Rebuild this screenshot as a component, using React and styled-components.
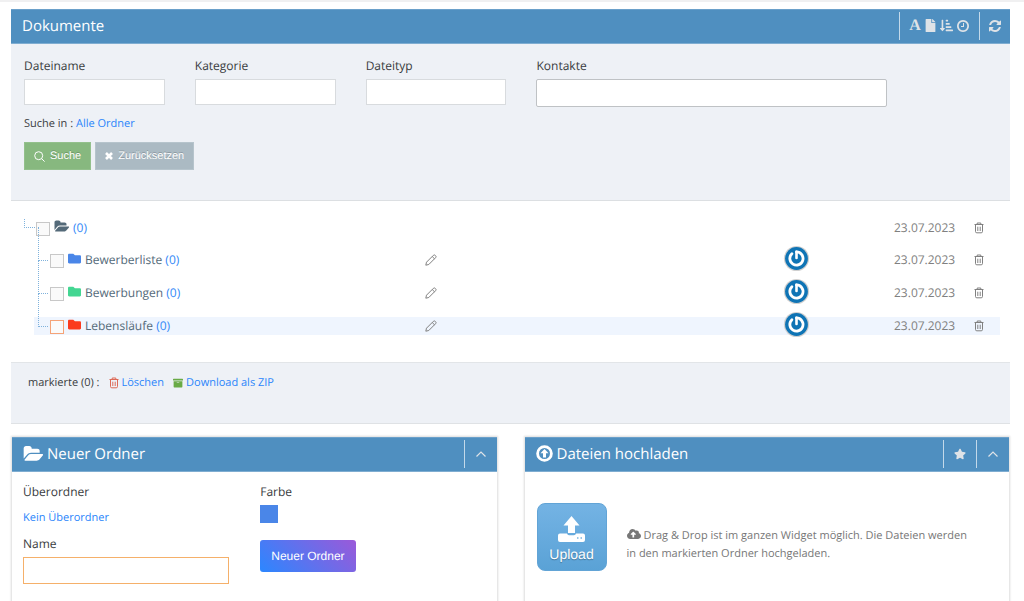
import { useState } from "react"
import styled, { createGlobalStyle } from "styled-components"
import { FaArchive, FaCloudUploadAlt, FaFile, FaFolder, FaSortAmountDownAlt, FaStar } from "react-icons/fa"

const GlobalStyle = createGlobalStyle`
  * {
    box-sizing: border-box;
  }
  body {
    margin: 0;
    background: white;
    color: #393c40;
    font-family: "Open Sans", "Noto Sans", sans-serif;
    font-size: 11px;
    line-height: 18px;
    text-rendering: geometricPrecision;
  }
  button, input {
    font-family: inherit;
    text-rendering: inherit;
  }
  svg {
    display: block;
    flex: none;
  }
`

const Page = styled.div`
  min-height: 100vh;
  display: flex;
  flex-direction: column;
  padding: 7px 14px 0 11px;
  border-top: 2px solid #f0f0f1;
`

const Bar = styled.header`
  height: 35px;
  flex: none;
  display: flex;
  align-items: center;
  padding: 0 0 2px 11px;
  background: #4f8fc0;
  border-top: 1px solid #6ba0ca;
  border-bottom: 1px solid #7fadd1;
  color: white;
`
const BarTitle = styled.h2`
  flex: 1;
  display: flex;
  align-items: center;
  gap: 4px;
  margin: 0;
  font-size: 15px;
  font-weight: 400;
`
const Tools = styled.div`
  height: 28px;
  display: flex;
  align-items: center;
  gap: 3px;
  padding: 0 ${props => props.$pad || 10}px;
  border-left: 1px solid #c3d9ea;
`
const IconButton = styled.button`
  display: flex;
  padding: 0;
  border: none;
  background: none;
  color: ${props => props.color || "#dfe3e7"};
  cursor: pointer;
`
const Letter = styled.span`
  width: 12px;
  font-family: "Liberation Serif", "Times New Roman", serif;
  font-size: 16px;
  font-weight: 700;
`

const Filter = styled.form`
  padding: 13px 123px 30px 13px;
  background: #eef1f6;
  border-bottom: 1px solid #dcdfe2;
`
const FilterFields = styled.div`
  display: grid;
  grid-template-columns: 141fr 141fr 141fr 351fr;
  gap: 30px;
  align-items: start;
`
const Field = styled.div`
  width: 100%;
  display: flex;
  flex-direction: column;
  gap: 4px;
`
const Label = styled.label`
  font-size: 12px;
`
const Input = styled.input`
  width: 100%;
  height: ${props => props.$height || 26}px;
  padding: 2px 6px;
  background: white;
  border: 1px solid ${props => props.$border || "#d8dbde"};
  border-radius: ${props => props.$radius || 0}px;
`
const SearchIn = styled.p`
  margin: 8px 0 9px;
`
const Link = styled.a`
  color: #2a85fb;
  text-decoration: none;
`
const Buttons = styled.div`
  display: flex;
  gap: 4px;
`
const Button = styled.button`
  height: 28px;
  display: flex;
  align-items: center;
  gap: 5px;
  padding: 0 9px;
  border: 1px solid ${props => props.$edge};
  background: ${props => props.$fill};
  color: white;
  font-family: "Liberation Sans", Arial, sans-serif;
  font-size: 11px;
  text-shadow: 0 -1px 0 rgba(0, 0, 0, 0.2);
  cursor: pointer;
`

const Tree = styled.ul`
  list-style: none;
  margin: 0;
  padding: 18px 10px 27px 23px;
`
const Branch = styled.ul`
  list-style: none;
  margin: 14px 0 0;
  padding: 0;
  display: flex;
  flex-direction: column;
  gap: 15px;
`
const Node = styled.li`
  position: relative;
  &::before {
    content: "";
    position: absolute;
    left: ${props => (props.$root ? "-10px" : "4px")};
    top: ${props => (props.$root ? "0" : "-24px")};
    width: ${props => (props.$root ? "10px" : "9px")};
    height: ${props => (props.$root ? "8px" : "33px")};
    border-left: 1px dotted #7fb2dc;
    border-bottom: 1px dotted #7fb2dc;
  }
`
const Row = styled.div`
  height: 18px;
  display: grid;
  grid-template-columns: 391fr 358fr 111fr 80fr 26px;
  grid-template-rows: 18px;
  align-items: center;
  background: ${props => (props.$active ? "#eff5fe" : "transparent")};
`
const Name = styled.label`
  display: flex;
  align-items: center;
  gap: 4px;
  padding-left: ${props => (props.$root ? 2 : 16)}px;
  color: #546a79;
  font-size: 12px;
  svg {
    margin-bottom: 3px;
  }
`
const Check = styled.input`
  appearance: none;
  width: 14px;
  height: 14px;
  flex: none;
  margin: 1px 0 0;
  background: #fafafa;
  border: 1px solid ${props => (props.$active ? "#f5a377" : "#c8c8c8")};
  &:checked {
    background: #8fb4d4;
  }
`
const Count = styled.span`
  color: #3388f7;
`
const DateText = styled.time`
  grid-column: 4;
  color: #808080;
  font-size: 12px;
`
const Owner = styled.span`
  display: flex;
  margin-bottom: 3px;
`

const Marked = styled.footer`
  display: flex;
  padding: 11px 17px 31px;
  background: #eef1f6;
  border-top: 1px solid #e2e5e8;
  border-bottom: 1px solid #dfe2e5;
`
const MarkedLink = styled(Link)`
  display: flex;
  align-items: center;
  gap: 3px;
  margin-left: 9px;
`

const Cards = styled.div`
  flex: 1;
  display: grid;
  grid-template-columns: 1fr 1fr;
  gap: 28px;
  margin: 13px 1px 0;
`
const Card = styled.section`
  display: flex;
  flex-direction: column;
  box-shadow: 0 0 2px 1px rgba(0, 0, 0, 0.14);
`
const FolderForm = styled.form`
  display: grid;
  grid-template-columns: 206fr 205fr;
  gap: 31px;
  padding: 11px 31px 18px 11px;
`
const FormColumn = styled.div`
  display: flex;
  flex-direction: column;
  align-items: flex-start;
  gap: ${props => props.$gap}px;
`
const Caption = styled.span`
  font-size: 12px;
`
const Swatch = styled.input`
  appearance: none;
  width: 18px;
  height: 18px;
  padding: 0;
  border: none;
  background: none;
  &::-webkit-color-swatch-wrapper {
    padding: 0;
  }
  &::-webkit-color-swatch {
    border: none;
  }
`
const CreateButton = styled.button`
  height: 32px;
  margin-top: 13px;
  padding: 0 11px;
  border: none;
  border-radius: 3px;
  background: linear-gradient(45deg, #2b87ff, #9b59d9);
  color: white;
  font-size: 12px;
  font-family: "Liberation Sans", Arial, sans-serif;
  cursor: pointer;
`
const UploadBody = styled.div`
  display: flex;
  align-items: center;
  gap: 20px;
  padding: 31px 40px 30px 12px;
`
const UploadButton = styled.button`
  width: 70px;
  height: 68px;
  flex: none;
  display: flex;
  flex-direction: column;
  align-items: center;
  justify-content: center;
  gap: 3px;
  padding: 4px 0 0;
  border: 1px solid #62a4d6;
  border-radius: 8px;
  background: linear-gradient(#74b3e4, #5aa2d6);
  color: white;
  font-family: "Liberation Sans", Arial, sans-serif;
  font-size: 14px;
  text-shadow: 0 1px 1px rgba(0, 0, 0, 0.3);
  cursor: pointer;
`
const Hint = styled.p`
  margin: 0;
  padding-top: 15px;
  color: #777;
  svg {
    display: inline-block;
    vertical-align: -2px;
    margin-right: 3px;
  }
`

const FolderOpen = ({ size }) => (
  <svg width={size} height={size} viewBox="0 0 1920 1792" fill="currentColor">
    <path d="M1943 952q0 31-31 66l-336 396q-43 51-120.5 86.500t-143.500 35.500h-1088q-34 0-60.500-13t-26.500-43q0-31 31-66l336-396q43-51 120.500-86.500t143.500-35.500h1088q34 0 60.500 13t26.500 43zm-343-344v160h-832q-94 0-197 47.500t-164 119.500l-337 396-5 6q0-4-.5-12.500t-.5-12.500v-960q0-92 66-158t158-66h320q92 0 158 66t66 158v32h544q92 0 158 66t66 158z" />
  </svg>
)
const Clock = () => (
  <svg width="14" height="14" viewBox="0 0 1792 1792" fill="currentColor">
    <path d="M1024 544v448q0 14-9 23t-23 9h-320q-14 0-23-9t-9-23v-64q0-14 9-23t23-9h224v-352q0-14 9-23t23-9h64q14 0 23 9t9 23zm416 352q0-148-73-273t-198-198-273-73-273 73-198 198-73 273 73 273 198 198 273 73 273-73 198-198 73-273zm224 0q0 209-103 385.500t-279.500 279.500-385.500 103-385.500-103-279.500-279.500-103-385.500 103-385.500 279.500-279.500 385.500-103 385.500 103 279.500 279.500 103 385.500z" />
  </svg>
)
const Refresh = () => (
  <svg width="12" height="14" viewBox="0 0 1536 1792" fill="currentColor">
    <path d="M1511 1056q0 5-1 7-64 268-268 434.500t-478 166.500q-146 0-282.500-55t-243.500-157l-129 129q-19 19-45 19t-45-19-19-45v-448q0-26 19-45t45-19h448q26 0 45 19t19 45-19 45l-137 137q71 66 161 102t187 36q134 0 250-65t186-179q11-17 53-117 8-23 30-23h192q13 0 22.500 9.500t9.500 22.500zm25-800v448q0 26-19 45t-45 19h-448q-26 0-45-19t-19-45 19-45l138-138q-148-137-349-137-134 0-250 65t-186 179q-11 17-53 117-8 23-30 23h-199q-13 0-22.500-9.500t-9.500-22.500v-7q65-268 270-434.500t480-166.500q146 0 284 55.500t245 156.500l130-129q19-19 45-19t45 19 19 45z" />
  </svg>
)
const Chevron = () => (
  <svg width="12" height="12" viewBox="0 0 12 12" fill="none" stroke="currentColor" strokeWidth="1.2">
    <path d="M1.500 8.500L6 4l4.500 4.500" />
  </svg>
)
const ArrowCircle = () => (
  <svg width="17" height="17" viewBox="0 0 17 17" fill="none" stroke="currentColor">
    <circle cx="8.5" cy="8.5" r="6.900" strokeWidth="2.800" />
    <path d="M8.500 4l4 4.200H10V12.500H7V8.200H4.500z" fill="currentColor" stroke="none" />
  </svg>
)
const Magnifier = () => (
  <svg width="11" height="11" viewBox="0 0 11 11" fill="none" stroke="currentColor">
    <circle cx="4.700" cy="4.700" r="4" />
    <path d="M7.600 7.600l3 3" />
  </svg>
)
const Cross = () => (
  <svg width="8" height="8" viewBox="0 0 8 8" fill="none" stroke="currentColor" strokeWidth="2.600">
    <path d="M1 1l6 6M7 1L1 7" />
  </svg>
)
const Pencil = () => (
  <svg width="12" height="12" viewBox="0 0 12 12" fill="none" stroke="currentColor" strokeWidth="1">
    <path d="M.8 11.200l.7-3L8.300 1.400q1-1 2 0l.3.3q1 1 0 2L3.800 10.500zM7.200 2.500l2.300 2.300" />
  </svg>
)
const Trash = () => (
  <svg width="10" height="12" viewBox="0 0 10 12" fill="none" stroke="currentColor" strokeWidth="1">
    <path d="M.5 2.500h9M3.200 2.300V1h3.600v1.300M1.500 2.700v6.800q0 1.300 1.300 1.300h4.400q1.300 0 1.300-1.300V2.700M3.800 4.700v4.300M6.200 4.700v4.300" />
  </svg>
)
const PowerLogo = () => (
  <svg width="27" height="27" viewBox="0 0 27 27" fill="none">
    <circle cx="13.500" cy="13.500" r="12.600" fill="#d0d0d0" />
    <circle cx="13.500" cy="13.500" r="11.400" fill="#0f74b5" />
    <path d="M13.500 6.900A6.600 6.600 0 1 1 8.900 8.700" stroke="white" strokeWidth="2.800" strokeLinecap="round" />
    <path d="M13.500 6.900v6" stroke="white" strokeWidth="2.600" strokeLinecap="round" />
  </svg>
)
const UploadIcon = () => (
  <svg width="27" height="27" viewBox="0 0 27 27">
    <path d="M13.500 0l8 9.500h-4.500V17h-7V9.500H5.500z" fill="white" />
    <path d="M2 17.500h7q.5 1.800 2 1.800h5q1.500 0 2-1.800h7q2 0 2 2v4.500q0 2-2 2H2q-2 0-2-2v-4.500q0-2 2-2z" fill="white" />
    <path d="M19 22h1.500M22.500 22H24" stroke="#7ab4df" strokeWidth="1.500" />
  </svg>
)

const folders = [
  { name: "Bewerberliste", color: "#4a86e8" },
  { name: "Bewerbungen", color: "#43d692" },
  { name: "Lebensläufe", color: "#fb3b1e", active: true },
]

const TreeEnd = () => (
  <>
    <DateText dateTime="2023-07-23">23.07.2023</DateText>
    <IconButton type="button" color="#808080" aria-label="Löschen"><Trash /></IconButton>
  </>
)

const App = () => {
  const [color, setColor] = useState("#4a86e8")

  return (
    <>
      <GlobalStyle />
      <Page>
        <Bar>
          <BarTitle>Dokumente</BarTitle>
          <Tools $pad={9}>
            <IconButton aria-label="Name"><Letter>A</Letter></IconButton>
            <IconButton aria-label="Datei"><FaFile size={13} /></IconButton>
            <IconButton aria-label="Sortieren"><FaSortAmountDownAlt size={13} /></IconButton>
            <IconButton aria-label="Zeit"><Clock /></IconButton>
          </Tools>
          <Tools $pad={9}>
            <IconButton aria-label="Aktualisieren"><Refresh /></IconButton>
          </Tools>
        </Bar>
        <Filter onSubmit={e => e.preventDefault()}>
          <FilterFields>
            <Field>
              <Label htmlFor="filename">Dateiname</Label>
              <Input id="filename" />
            </Field>
            <Field>
              <Label htmlFor="category">Kategorie</Label>
              <Input id="category" />
            </Field>
            <Field>
              <Label htmlFor="filetype">Dateityp</Label>
              <Input id="filetype" />
            </Field>
            <Field>
              <Label htmlFor="contacts">Kontakte</Label>
              <Input id="contacts" $height={28} $border="#bfc2c5" $radius={2} />
            </Field>
          </FilterFields>
          <SearchIn>Suche in : <Link href="#">Alle Ordner</Link></SearchIn>
          <Buttons>
            <Button $fill="#87b87f" $edge="#93c08c"><Magnifier />Suche</Button>
            <Button type="reset" $fill="#abbac3" $edge="#b6c4cc"><Cross />Zurücksetzen</Button>
          </Buttons>
        </Filter>
        <Tree>
          <Node $root>
            <Row>
              <Name $root>
                <Check type="checkbox" />
                <FolderOpen size={15} />
                <Count>(0)</Count>
              </Name>
              <TreeEnd />
            </Row>
            <Branch>
              {folders.map(folder => (
                <Node key={folder.name}>
                  <Row $active={folder.active}>
                    <Name>
                      <Check type="checkbox" $active={folder.active} />
                      <FaFolder size={13} color={folder.color} />
                      <span>{folder.name} <Count>(0)</Count></span>
                    </Name>
                    <IconButton type="button" color="#808080" aria-label="Bearbeiten"><Pencil /></IconButton>
                    <Owner><PowerLogo /></Owner>
                    <TreeEnd />
                  </Row>
                </Node>
              ))}
            </Branch>
          </Node>
        </Tree>
        <Marked>
          <span>markierte (0) :</span>
          <MarkedLink href="#">
            <IconButton as="span" color="#dd6a57"><Trash /></IconButton>
            Löschen
          </MarkedLink>
          <MarkedLink href="#">
            <FaArchive size={10} color="#69aa46" />
            Download als ZIP
          </MarkedLink>
        </Marked>
        <Cards>
          <Card>
            <Bar>
              <BarTitle><FolderOpen size={20} />Neuer Ordner</BarTitle>
              <Tools><IconButton aria-label="Einklappen"><Chevron /></IconButton></Tools>
            </Bar>
            <FolderForm onSubmit={e => e.preventDefault()}>
              <FormColumn $gap={8}>
                <Caption>Überordner</Caption>
                <Link href="#">Kein Überordner</Link>
                <Field>
                  <Label htmlFor="foldername">Name</Label>
                  <Input id="foldername" $height={27} $border="#f5b06a" />
                </Field>
              </FormColumn>
              <FormColumn $gap={4}>
                <Label htmlFor="color">Farbe</Label>
                <Swatch id="color" type="color" value={color} onChange={e => setColor(e.target.value)} />
                <CreateButton>Neuer Ordner</CreateButton>
              </FormColumn>
            </FolderForm>
          </Card>
          <Card>
            <Bar>
              <BarTitle><ArrowCircle />Dateien hochladen</BarTitle>
              <Tools><IconButton aria-label="Favorit"><FaStar size={12} /></IconButton></Tools>
              <Tools><IconButton aria-label="Einklappen"><Chevron /></IconButton></Tools>
            </Bar>
            <UploadBody>
              <UploadButton type="button"><UploadIcon />Upload</UploadButton>
              <Hint>
                <FaCloudUploadAlt size={14} />
                Drag &amp; Drop ist im ganzen Widget möglich. Die Dateien werden in den markierten Ordner hochgeladen.
              </Hint>
            </UploadBody>
          </Card>
        </Cards>
      </Page>
    </>
  )
}

export default App
